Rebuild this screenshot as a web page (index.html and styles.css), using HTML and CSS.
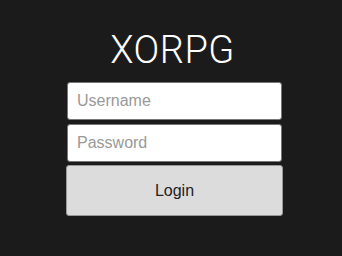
FILE: index.html
```html
<!DOCTYPE html>
<html lang="en">
<head>
  <meta charset="UTF-8" />
  <meta name="viewport" content="width=device-width, initial-scale=1.0"/>
  <title>XORPG</title>
  <link rel="stylesheet" href="styles.css">
</head>
<body>
  <form class="login">
    <h1 class="logo">XORPG</h1>
    <input class="field" type="text" placeholder="Username" />
    <input class="field" type="password" placeholder="Password" />
    <button class="login-btn" type="button">Login</button>
  </form>
</body>
</html>
```

FILE: styles.css
```css
body {
  background: #1b1b1b;
  margin: 0;
  font-family: "Liberation Sans", Arial, sans-serif;
}

.login {
  width: 217px;
  margin: 0 0 0 66px;
  padding-top: 28px;
  display: flex;
  flex-direction: column;
  gap: 4px;
}

.logo {
  margin: 0 0 6px 0;
  text-align: center;
  color: #fff;
  font-family: Roboto, "Liberation Sans", sans-serif;
  font-weight: 300;
  font-size: 38px;
  line-height: 44px;
  letter-spacing: 0.5px;
  padding-right: 4px;
}

.field {
  box-sizing: border-box;
  width: 215px;
  height: 38px;
  margin-left: 1px;
  padding: 0 9px;
  border: 1px solid #777;
  border-radius: 3px;
  background: #fff;
  font-family: "Liberation Sans", Arial, sans-serif;
  font-size: 16px;
  color: #333;
}

.field::placeholder {
  color: #999;
}

.login-btn {
  box-sizing: border-box;
  width: 217px;
  height: 51px;
  margin-top: -1px;
  border: 1px solid #999;
  border-radius: 3px;
  background: #dcdcdc;
  font-family: "Liberation Sans", Arial, sans-serif;
  font-size: 16px;
  color: #222;
  cursor: pointer;
}
```
